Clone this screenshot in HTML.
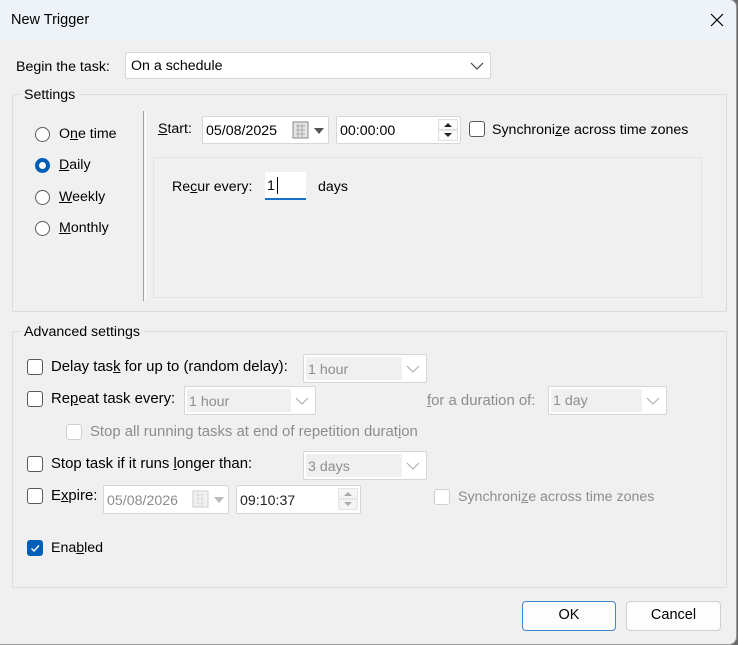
<!DOCTYPE html>
<html><head><meta charset="utf-8"><style>
*{box-sizing:border-box;margin:0;padding:0}
body{width:738px;height:645px;background:#6a6a6a;font-family:"Liberation Sans",sans-serif;font-size:14px;color:#000;overflow:hidden;position:relative}
.win{position:absolute;left:-2px;top:-1px;width:739px;height:646px;background:#f0f0f0;border:1px solid #9a9a9a;border-radius:0 8px 8px 0;overflow:hidden}
.title{position:absolute;left:0;top:0;width:100%;height:40px;background:#eef2f9}
.a{position:absolute;white-space:nowrap}
.t{position:absolute;white-space:nowrap;line-height:16px;font-size:14.2px}
.g{color:#8d8d8d}
.box{position:absolute;background:#fff;border:1px solid #d6d6d6;border-radius:2px}
.grp{position:absolute;border:1px solid #dcdcdc;border-radius:2px}
.rad{position:absolute;width:15px;height:15px;border:1px solid #5a5a5a;border-radius:50%;background:#fff}
.cb{position:absolute;width:16px;height:16px;border:1px solid #5a5a5a;border-radius:3px;background:#fff}
.cb.d{border-color:#cfcfcf}
.dis{position:absolute;background:#f0f0f0;left:2px;top:2px;bottom:2px}
.chev{position:absolute;top:50%;margin-top:-4px;width:14px;height:8px}
u{text-decoration:underline}
.btn{position:absolute;height:30px;border:1px solid #d0d0d0;border-radius:4px;background:#fdfdfd;text-align:center;line-height:27px;font-size:14.5px}
.w{font-size:14.9px}
</style></head><body>
<div class="win">
<div class="title"></div>
<div class="t" style="left:12px;top:12px;font-size:14.5px">New Trigger</div>
<svg class="a" style="left:711px;top:13px" width="14" height="14"><path d="M1 1L13 13M13 1L1 13" stroke="#000" stroke-width="1.2"/></svg>

<div class="t" style="left:17px;top:59px">Be<u>g</u>in the task:</div>
<div class="box" style="left:126px;top:52px;width:366px;height:27px"><span class="t" style="left:5px;top:5px">On a schedule</span>
<svg class="chev" style="right:6px" viewBox="0 0 14 8"><path d="M1 1L7 7L13 1" fill="none" stroke="#444" stroke-width="1.2"/></svg></div>

<div class="grp" style="left:13px;top:94px;width:715px;height:218px"></div>
<div class="t" style="left:21px;top:87px;background:#f0f0f0;padding:0 4px">Settings</div>
<div class="rad" style="left:36px;top:127px"></div><div class="t" style="left:60px;top:126px">O<u>n</u>e time</div>
<div class="rad" style="left:36px;top:158px;border:4px solid #005fb8"></div><div class="t" style="left:60px;top:157px"><u>D</u>aily</div>
<div class="rad" style="left:36px;top:190px"></div><div class="t" style="left:60px;top:189px"><u>W</u>eekly</div>
<div class="rad" style="left:36px;top:221px"></div><div class="t" style="left:60px;top:220px"><u>M</u>onthly</div>
<div class="a" style="left:144px;top:111px;width:3px;height:190px;border-left:1px solid #a0a0a0;border-right:1px solid #fff"></div>

<div class="t" style="left:159px;top:121px"><u>S</u>tart:</div>
<div class="box" style="left:203px;top:116px;width:127px;height:28px"><span class="t" style="left:3px;top:6px">05/08/2025</span>
<svg class="a" style="left:89px;top:4px" width="36" height="20"><rect x="1" y="1" width="15" height="16" fill="#e4e4e4" stroke="#888"/><path d="M4 5h9M4 9h9M4 13h9M6 3v13M10 3v13" stroke="#aaa"/><path d="M22 7h10l-5 6z" fill="#555"/></svg></div>
<div class="box" style="left:337px;top:116px;width:125px;height:28px"><span class="t" style="left:3px;top:6px">00:00:00</span>
<svg class="a" style="left:101px;top:2px" width="20" height="22"><rect x="0.5" y="0.5" width="19" height="10" fill="#fafafa" stroke="#e0e0e0"/><rect x="0.5" y="11.5" width="19" height="10" fill="#fafafa" stroke="#e0e0e0"/><path d="M6 8h8l-4-4z M6 14h8l-4 4z" fill="#222"/></svg></div>
<div class="cb" style="left:470px;top:121px"></div><div class="t" style="left:493px;top:122px">Synchroni<u>z</u>e across time zones</div>

<div class="a" style="left:154px;top:157px;width:549px;height:141px;border:1px solid #e3e3e3"></div>
<div class="t" style="left:173px;top:179px">Re<u>c</u>ur every:</div>
<div class="a" style="left:266px;top:172px;width:41px;height:28px;background:#fff;border-bottom:2px solid #1a6fc9"><span class="t" style="left:2px;top:6px">1</span><span class="a" style="left:12px;top:5px;width:1px;height:17px;background:#000"></span></div>
<div class="t" style="left:319px;top:179px">days</div>

<div class="grp" style="left:13px;top:331px;width:715px;height:257px"></div>
<div class="t" style="left:21px;top:324px;background:#f0f0f0;padding:0 4px">Advanced settings</div>

<div class="cb" style="left:28px;top:359px"></div><div class="t w" style="left:52px;top:359px">Delay tas<u>k</u> for up to (random delay):</div>
<div class="box" style="left:304px;top:354px;width:124px;height:29px"><div class="dis" style="width:96px"></div><span class="t g" style="left:4px;top:7px">1 hour</span><svg class="chev" style="right:6px" viewBox="0 0 14 8"><path d="M1 1L7 7L13 1" fill="none" stroke="#aaa"/></svg></div>

<div class="cb" style="left:28px;top:391px"></div><div class="t w" style="left:52px;top:391px">Re<u>p</u>eat task every:</div>
<div class="box" style="left:185px;top:386px;width:132px;height:29px"><div class="dis" style="width:104px"></div><span class="t g" style="left:4px;top:7px">1 hour</span><svg class="chev" style="right:6px" viewBox="0 0 14 8"><path d="M1 1L7 7L13 1" fill="none" stroke="#aaa"/></svg></div>
<div class="t g w" style="left:428px;top:393px"><u>f</u>or a duration of:</div>
<div class="box" style="left:549px;top:386px;width:119px;height:29px"><div class="dis" style="width:91px"></div><span class="t g" style="left:4px;top:6px">1 day</span><svg class="chev" style="right:6px" viewBox="0 0 14 8"><path d="M1 1L7 7L13 1" fill="none" stroke="#aaa"/></svg></div>

<div class="cb d" style="left:67px;top:424px"></div><div class="t g w" style="left:91px;top:424px">Stop all running tasks at end of repetition durat<u>i</u>on</div>

<div class="cb" style="left:28px;top:456px"></div><div class="t w" style="left:52px;top:456px">Stop task if it runs <u>l</u>onger than:</div>
<div class="box" style="left:304px;top:451px;width:124px;height:29px"><div class="dis" style="width:96px"></div><span class="t g" style="left:4px;top:7px">3 days</span><svg class="chev" style="right:6px" viewBox="0 0 14 8"><path d="M1 1L7 7L13 1" fill="none" stroke="#aaa"/></svg></div>

<div class="cb" style="left:28px;top:488px"></div><div class="t w" style="left:52px;top:488px">E<u>x</u>pire:</div>
<div class="box" style="left:104px;top:485px;width:126px;height:29px"><span class="t g" style="left:3px;top:7px">05/08/2026</span>
<svg class="a" style="left:88px;top:4px" width="36" height="20"><rect x="1" y="1" width="15" height="16" fill="#f2f2f2" stroke="#ccc"/><path d="M4 5h9M4 9h9M4 13h9M6 3v13M10 3v13" stroke="#ddd"/><path d="M22 7h10l-5 6z" fill="#bbb"/></svg></div>
<div class="box" style="left:237px;top:485px;width:125px;height:29px"><span class="t" style="left:3px;top:7px;color:#222">09:10:37</span>
<svg class="a" style="left:101px;top:2px" width="20" height="23"><rect x="0.5" y="0.5" width="19" height="10" fill="#f4f4f4" stroke="#e6e6e6"/><rect x="0.5" y="11.5" width="19" height="10" fill="#f4f4f4" stroke="#e6e6e6"/><path d="M6 8h8l-4-4z M6 14h8l-4 4z" fill="#aaa"/></svg></div>
<div class="cb d" style="left:435px;top:489px"></div><div class="t g" style="left:459px;top:489px">Synchroni<u>z</u>e across time zones</div>

<div class="cb" style="left:28px;top:540px;background:#005fb8;border-color:#005fb8"><svg width="14" height="14" style="position:absolute;left:0;top:0"><path d="M3.5 7.5L6 10L11 4.5" fill="none" stroke="#fff" stroke-width="1.4"/></svg></div>
<div class="t" style="left:52px;top:540px">Ena<u>b</u>led</div>

<div class="btn" style="left:523px;top:601px;width:94px;border-color:#3f86d0">OK</div>
<div class="btn" style="left:627px;top:601px;width:95px">Cancel</div>
</div>
</body></html>
